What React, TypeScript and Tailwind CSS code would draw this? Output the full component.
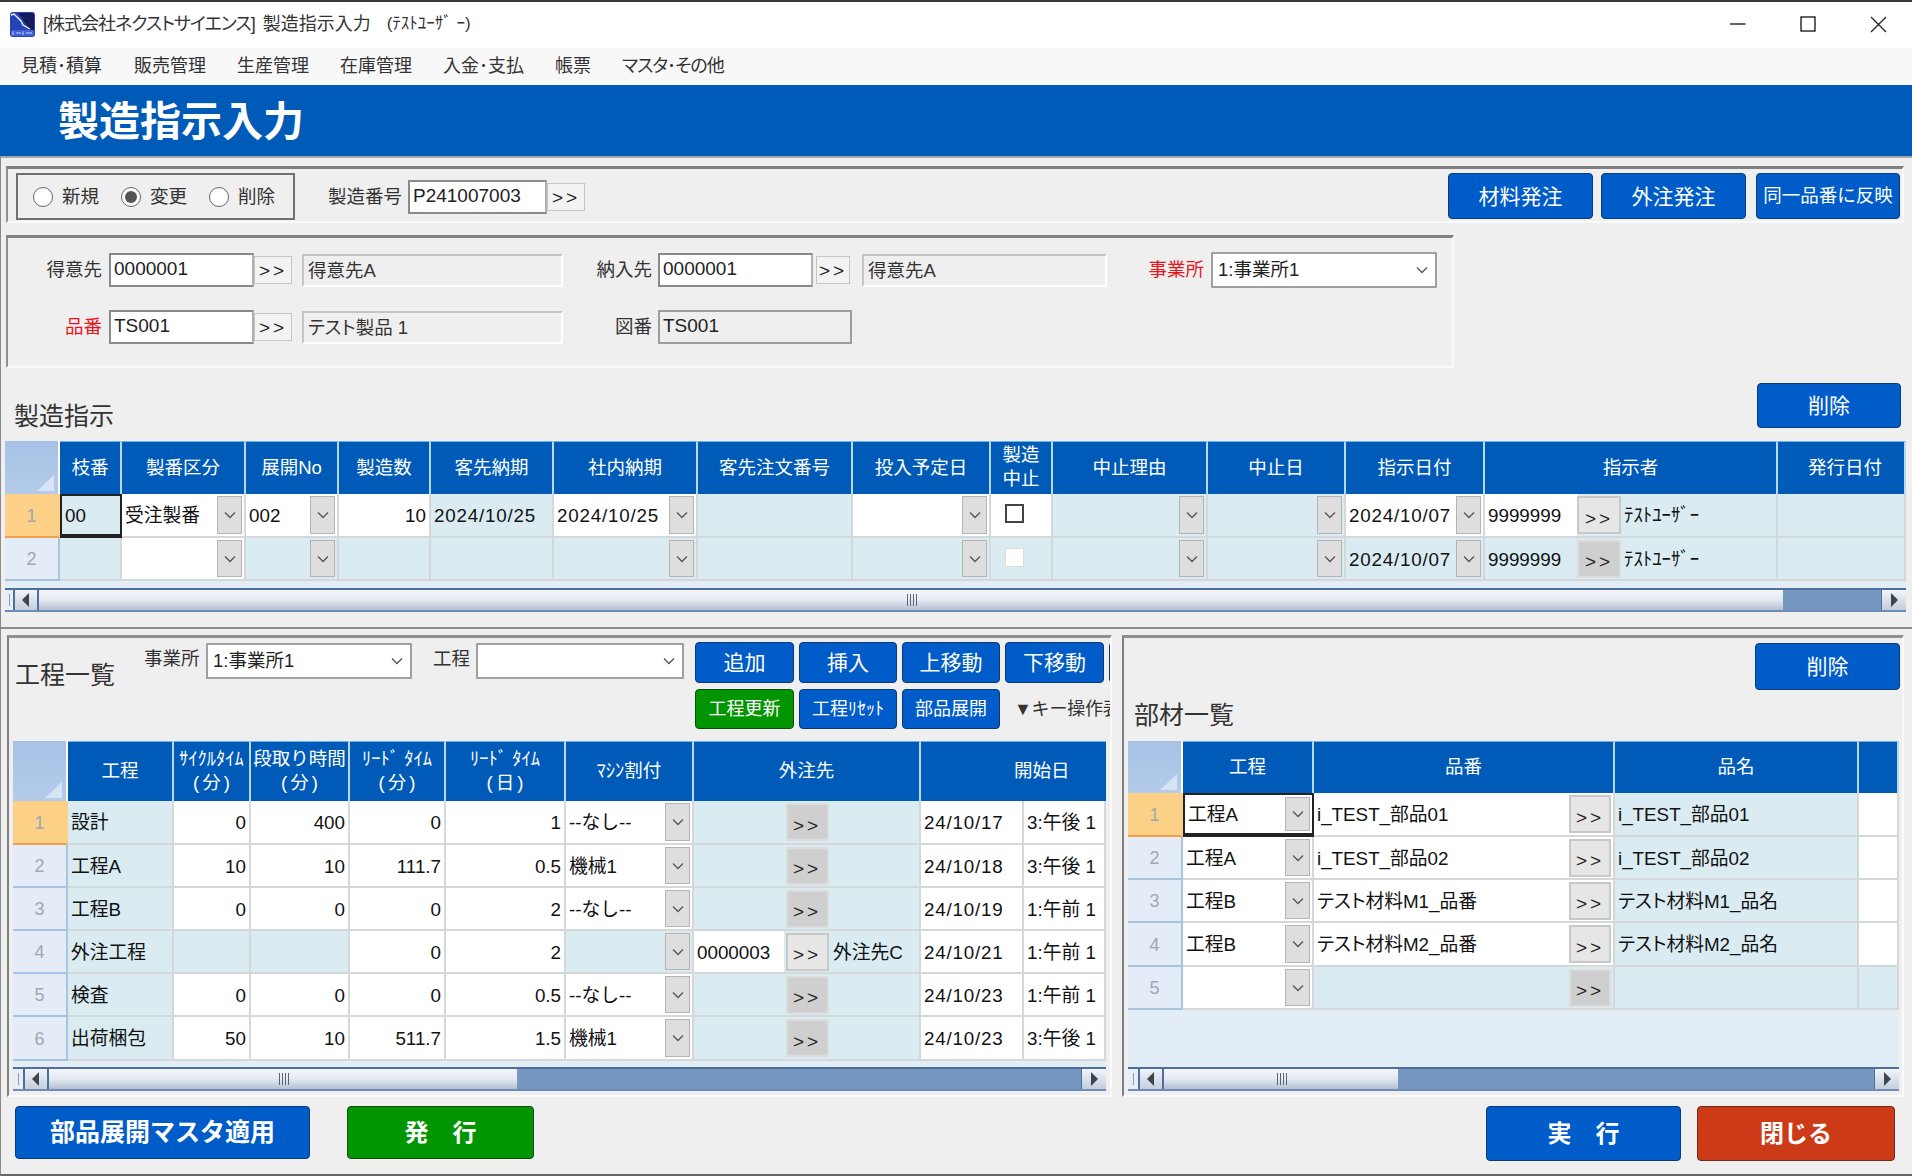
import type { ReactNode } from "react";

const JP = "font-['Liberation_Sans','Noto_Sans_CJK_JP',sans-serif]";

function Chevron() {
    return (
        <svg width="12" height="8" viewBox="0 0 12 8" className="shrink-0">
            <path d="M1 1.5 L6 6.5 L11 1.5" fill="none" stroke="#555" strokeWidth="1.3" />
        </svg>
    );
}

function DropBtn() {
    return (
        <div className="w-[25px] shrink-0 self-stretch my-[2px] mr-[2px] flex items-center justify-center bg-[#dedede] border border-[#b4b4b4]">
            <Chevron />
        </div>
    );
}

function ArrowBtn({ dark, w = "w-[42px]", h = "h-[36px]" }: { dark?: boolean; w?: string; h?: string }) {
    return (
        <div className={`${w} ${h} shrink-0 flex items-center justify-center pt-[6px] text-[19px] tracking-[3px] text-[#222] ${dark ? "bg-[#cfcfcf] border-2 border-[#dcdcdc]" : "bg-[#e6e6e6] border-2 border-[#c8c8c8]"}`}>
            &gt;&gt;
        </div>
    );
}

function FormBtn({ w }: { w: string }) {
    return (
        <div className={`${w} h-[28px] shrink-0 flex items-center justify-center pt-[3px] bg-[#f3f3f3] border border-[#c6c6c6] text-[19px] tracking-[3px] text-[#222]`}>
            &gt;&gt;
        </div>
    );
}

function Input({ w, h = "h-[34px]", children }: { w: string; h?: string; children: ReactNode }) {
    return (
        <div className={`${w} ${h} shrink-0 bg-white border-2 border-t-[#8a8a8a] border-l-[#8a8a8a] border-r-[#b0b0b0] border-b-[#8a8a8a] px-[3px] flex items-center text-[19px] text-[#222] leading-none pb-[3px]`}>
            {children}
        </div>
    );
}

function ReadOnly({ w, children }: { w: string; children: ReactNode }) {
    return (
        <div className={`${w} h-[33px] shrink-0 bg-[#efefef] border-2 border-t-[#c4c4c4] border-l-[#c4c4c4] border-r-white border-b-white px-[4px] pt-[2px] flex items-center text-[18.5px] text-[#333] leading-none [font-feature-settings:'palt']`}>
            {children}
        </div>
    );
}

function Select({ w, value }: { w: string; value?: string }) {
    return (
        <div className={`${w} h-[36px] shrink-0 bg-white border-2 border-[#a0a0a0] pl-[5px] pr-[7px] flex items-center justify-between text-[18.5px] text-[#222]`}>
            <span>{value}</span>
            <Chevron />
        </div>
    );
}

function Label({ w, red, children }: { w: string; red?: boolean; children: ReactNode }) {
    return <div className={`${w} shrink-0 text-right text-[18.5px] whitespace-nowrap ${red ? "text-[#e8141c]" : "text-[#333]"}`}>{children}</div>;
}

function Btn({ w, h, color = "blue", text = "text-[21px]", children }: { w: string; h: string; color?: "blue" | "green" | "red"; text?: string; children: ReactNode }) {
    const c = color == "green"
        ? "bg-[#019601] border-[#0c4f0c]"
        : color == "red"
            ? "bg-[#cc3a18] border-[#6c2a18]"
            : "bg-[#005cc8] border-[#0c3a72]";
    return (
        <div className={`${w} ${h} ${c} ${text} shrink-0 rounded-[4px] border-[1.5px] flex items-center justify-center text-white leading-none whitespace-pre`}>
            {children}
        </div>
    );
}

function Radio({ label, checked }: { label: string; checked?: boolean }) {
    return (
        <div className="w-[88px] shrink-0 flex items-center gap-[9px]">
            <div className="w-[20px] h-[20px] rounded-full bg-white border-[1.5px] border-[#666] flex items-center justify-center">
                {checked && <div className="w-[12px] h-[12px] rounded-full bg-[#555]" />}
            </div>
            <span className="text-[18.5px] text-[#333]">{label}</span>
        </div>
    );
}

function Scrollbar({ grip, thumb, gripAt }: { grip: string; thumb: string; gripAt: string }) {
    return (
        <div className="h-[24px] flex items-stretch bg-[#7698c0] border-y-2 border-t-[#4e6f9e] border-b-[#6d8db8]">
            <div className={`${grip} shrink-0 bg-[#e8eef6] flex items-center justify-center`}>
                <div className="w-[1px] h-[12px] bg-[#8a9ab0]" />
            </div>
            <div className="w-[26px] shrink-0 bg-gradient-to-b from-[#f2f5fa] to-[#c4cedd] border-x-2 border-[#4e6f9e] flex items-center justify-center">
                <svg width="8" height="14" viewBox="0 0 8 14"><path d="M7 0 V14 L0 7 Z" fill="#3d4650" /></svg>
            </div>
            <div className={`${thumb} shrink-0 bg-gradient-to-b from-[#f4f6fb] via-[#e4e9f1] to-[#b4c0d2] flex items-center ${gripAt}`}>
                <div className="flex gap-[2px]">
                    <div className="w-[1px] h-[12px] bg-[#5a6675]" />
                    <div className="w-[1px] h-[12px] bg-[#5a6675]" />
                    <div className="w-[1px] h-[12px] bg-[#5a6675]" />
                    <div className="w-[1px] h-[12px] bg-[#5a6675]" />
                </div>
            </div>
            <div className="flex-1" />
            <div className="w-[25px] shrink-0 bg-gradient-to-b from-[#f2f5fa] to-[#c4cedd] border-l border-[#4e6f9e] flex items-center justify-center">
                <svg width="8" height="14" viewBox="0 0 8 14"><path d="M1 0 V14 L8 7 Z" fill="#3d4650" /></svg>
            </div>
        </div>
    );
}

function Corner() {
    return (
        <div className="bg-gradient-to-b from-[#a6c2e6] to-[#b4cbea] flex items-end justify-end pr-[4px] pb-[3px] border-r-2 border-white">
            <svg width="17" height="16" viewBox="0 0 17 16"><path d="M17 0 V16 H0 Z" fill="#d6e4f5" /></svg>
        </div>
    );
}

function Head({ children, small, pad }: { children?: ReactNode; small?: boolean; pad?: string }) {
    return (
        <div className={`bg-[#005bb8] border-t border-[#6fb4e8] border-r-2 border-r-[#b8d8f0] flex items-center justify-center text-center text-white pb-[2px] ${small ? "leading-[24px]" : "leading-[25px]"} text-[18.5px] overflow-hidden whitespace-nowrap ${pad ?? ""}`}>
            <div>{children}</div>
        </div>
    );
}

function Paren({ children }: { children: ReactNode }) {
    return <span className="tracking-[3px] pl-[3px]">({children})</span>;
}

function RowHead({ n, sel }: { n: number; sel?: boolean }) {
    return (
        <div className={`flex items-center justify-center pt-[2px] text-[18px] text-[#a0a8b0] border-r-2 ${sel ? "bg-[#fdd088] border-b-2 border-b-[#f0a04a] border-r-[#fdd088]" : "bg-[#e4ecf7] border-b-2 border-b-[#a9c4e0] border-r-[#a9c4e0]"}`}>
            {n}
        </div>
    );
}

// b = 水色セル, 無指定 = 白セル
function Cell({ b, right, sel, children }: { b?: boolean; right?: boolean; sel?: boolean; children?: ReactNode }) {
    return (
        <div className={`flex items-center overflow-hidden whitespace-nowrap text-[19px] text-[#111] leading-none ${b ? "bg-[#daecf2]" : "bg-white"} ${right ? "justify-end" : ""} ${sel ? "border-2 border-b-[4px] border-[#222]" : "border-r-2 border-b-2 border-[#d4d8da]"}`}>
            {children}
        </div>
    );
}

function Txt({ children, grow, date, palt }: { children?: ReactNode; grow?: boolean; date?: boolean; palt?: boolean }) {
    return <span className={`px-[3px] pt-[3px] text-[18.8px] ${grow ? "flex-1" : ""} ${date ? "tracking-[0.8px]" : ""} ${palt ? "[font-feature-settings:'palt']" : ""}`}>{children}</span>;
}

function Chk({ on }: { on?: boolean }) {
    return <div className={`ml-[14px] mb-[3px] w-[19px] h-[19px] bg-white ${on ? "border-2 border-[#444]" : "border border-[#dddddd]"}`} />;
}

const g1 = "grid grid-cols-[55px_62px_124px_93px_92px_123px_144px_155px_138px_62px_155px_138px_139px_293px_128px]";
const g2 = "grid grid-cols-[55px_106px_77px_99px_96px_120px_128px_227px_185px]";
const g3 = "grid grid-cols-[55px_131px_301px_244px_40px]";

const processes = [
    { n: 1, name: "設計", cy: "0", st: "400", lm: "0", ld: "1", m: "--なし--", date: "24/10/17", slot: "3:午後 1" },
    { n: 2, name: "工程A", cy: "10", st: "10", lm: "111.7", ld: "0.5", m: "機械1", date: "24/10/18", slot: "3:午後 1" },
    { n: 3, name: "工程B", cy: "0", st: "0", lm: "0", ld: "2", m: "--なし--", date: "24/10/19", slot: "1:午前 1" },
    { n: 4, name: "外注工程", lm: "0", ld: "2", code: "0000003", out: "外注先C", date: "24/10/21", slot: "1:午前 1" },
    { n: 5, name: "検査", cy: "0", st: "0", lm: "0", ld: "0.5", m: "--なし--", date: "24/10/23", slot: "1:午前 1" },
    { n: 6, name: "出荷梱包", cy: "50", st: "10", lm: "511.7", ld: "1.5", m: "機械1", date: "24/10/23", slot: "3:午後 1" },
];

const parts = [
    { n: 1, proc: "工程A", no: "i_TEST_部品01", name: "i_TEST_部品01" },
    { n: 2, proc: "工程A", no: "i_TEST_部品02", name: "i_TEST_部品02" },
    { n: 3, proc: "工程B", no: "テスト材料M1_品番", name: "テスト材料M1_品名" },
    { n: 4, proc: "工程B", no: "テスト材料M2_品番", name: "テスト材料M2_品名" },
    { n: 5, proc: "" },
];

export default function App() {
    return (
        <div className={`w-[1912px] h-[1176px] bg-[#efefef] flex flex-col overflow-hidden ${JP}`}>
            {/* title bar */}
            <div className="h-[48px] shrink-0 bg-white border-t-2 border-[#3a3a3a] flex items-center pl-[10px] pb-[2px]">
                <svg width="25" height="25" viewBox="0 0 25 25" className="shrink-0">
                    <rect width="25" height="25" rx="3" fill="#2742b4" />
                    <path d="M8 1 H22 Q24 1 24 3 V18 H20 Z" fill="#141c5c" />
                    <path d="M1 3 L4 2 L11 9 L13 13 L20 17" fill="none" stroke="#eef2fc" strokeWidth="1.4" />
                    <rect x="1" y="18" width="23" height="6" rx="1" fill="#3f5fd8" />
                    <path d="M3 19.5 V23 M6 21 H11 M13 19.5 V23 M16 21 H22" stroke="#c8d6f8" strokeWidth="1" />
                </svg>
                <span className="ml-[8px] text-[18px] text-[#333] [font-feature-settings:'palt'] tracking-[-1px]">[株式会社ネクストサイエンス]</span>
                <span className="ml-[8px] text-[18px] text-[#333]">製造指示入力</span>
                <span className="ml-[16px] text-[17px] text-[#333]">(ﾃｽﾄﾕｰｻﾞ ｰ)</span>
                <div className="ml-auto flex items-center">
                    <svg width="16" height="16" viewBox="0 0 16 16" className="mr-[54px]"><path d="M0 8 H15.5" stroke="#222" strokeWidth="1.4" /></svg>
                    <svg width="16" height="16" viewBox="0 0 16 16" className="mr-[54px]"><rect x="1" y="1" width="14" height="14" fill="none" stroke="#222" strokeWidth="1.4" /></svg>
                    <svg width="17" height="17" viewBox="0 0 17 17" className="mr-[25px]"><path d="M1 1 L16 16 M16 1 L1 16" stroke="#222" strokeWidth="1.3" /></svg>
                </div>
            </div>

            {/* menu */}
            <div className="h-[37px] shrink-0 bg-[#f8f8f8] flex items-center gap-[31px] pl-[21px] text-[18px] text-[#333]">
                <span className="mr-[1px]">見積･積算</span>
                <span>販売管理</span>
                <span>生産管理</span>
                <span>在庫管理</span>
                <span>入金･支払</span>
                <span>帳票</span>
                <span className="[font-feature-settings:'palt'] tracking-[-1px]">マスタ･その他</span>
            </div>

            {/* page title */}
            <div className="h-[71px] shrink-0 bg-[#005bb8] flex items-center pl-[58px] pt-[3px]">
                <span className="text-[41px] font-bold text-white leading-none">製造指示入力</span>
            </div>

            <div className="flex-1 flex flex-col border-t-2 border-t-[#a8a8a8] border-l border-l-[#8a8a8a] border-b-2 border-b-[#666]">
                {/* mode */}
                <div className="mt-[8px] ml-[5px] w-[1898px] h-[57px] shrink-0 border-t-[3px] border-l-2 border-t-[#808080] border-l-[#909090] border-r-2 border-b-2 border-r-[#fafafa] border-b-[#fafafa] pl-[8px] pr-[2px] pt-[4px] flex items-start">
                    <div className="w-[279px] h-[47px] shrink-0 border-2 border-[#707070] pl-[15px] flex items-center">
                        <Radio label="新規" />
                        <Radio label="変更" checked />
                        <Radio label="削除" />
                    </div>
                    <div className="h-[47px] flex items-center ml-[33px]">
                        <Label w="w-[74px]">製造番号</Label>
                        <div className="ml-[6px]"><Input w="w-[139px]">P241007003</Input></div>
                        <FormBtn w="w-[38px]" />
                    </div>
                    <div className="ml-auto flex">
                        <Btn w="w-[145px]" h="h-[46px]">材料発注</Btn>
                        <div className="ml-[8px]"><Btn w="w-[145px]" h="h-[46px]">外注発注</Btn></div>
                        <div className="ml-[10px]"><Btn w="w-[144px]" h="h-[46px]" text="text-[18.5px]">同一品番に反映</Btn></div>
                    </div>
                </div>

                {/* customer / item */}
                <div className="mt-[12px] ml-[5px] w-[1448px] h-[133px] shrink-0 border-t-[3px] border-l-2 border-t-[#808080] border-l-[#909090] border-r-2 border-b-2 border-r-[#fafafa] border-b-[#fafafa] pt-[14px]">
                    <div className="h-[36px] flex items-center">
                        <Label w="w-[94px]">得意先</Label>
                        <div className="ml-[7px]"><Input w="w-[145px]">0000001</Input></div>
                        <FormBtn w="w-[38px]" />
                        <div className="ml-[10px]"><ReadOnly w="w-[261px]">得意先A</ReadOnly></div>
                        <Label w="w-[89px]">納入先</Label>
                        <div className="ml-[6px]"><Input w="w-[155px]">0000001</Input></div>
                        <div className="ml-[3px]"><FormBtn w="w-[34px]" /></div>
                        <div className="ml-[12px]"><ReadOnly w="w-[245px]">得意先A</ReadOnly></div>
                        <Label w="w-[97px]" red>事業所</Label>
                        <div className="ml-[7px]"><Select w="w-[226px]" value="1:事業所1" /></div>
                    </div>
                    <div className="mt-[21px] h-[36px] flex items-center">
                        <Label w="w-[94px]" red>品番</Label>
                        <div className="ml-[7px]"><Input w="w-[145px]">TS001</Input></div>
                        <FormBtn w="w-[38px]" />
                        <div className="ml-[10px]"><ReadOnly w="w-[261px]">テスト製品 1</ReadOnly></div>
                        <Label w="w-[89px]">図番</Label>
                        <div className="ml-[6px]">
                            <div className="w-[194px] h-[34px] bg-[#efefef] border-2 border-[#9c9c9c] px-[3px] flex items-center text-[19px] text-[#222] leading-none pb-[3px]">TS001</div>
                        </div>
                    </div>
                </div>

                {/* 製造指示 */}
                <div className="h-[73px] shrink-0 flex justify-between pl-[13px] pr-[11px]">
                    <div className="mt-[36px] text-[25px] leading-none text-[#333]">製造指示</div>
                    <div className="mt-[15px]"><Btn w="w-[144px]" h="h-[45px]">削除</Btn></div>
                </div>
                <div className="ml-[4px] w-[1901px] shrink-0">
                    <div className={`${g1} h-[53px]`}>
                        <Corner />
                        <Head>枝番</Head>
                        <Head>製番区分</Head>
                        <Head>展開No</Head>
                        <Head>製造数</Head>
                        <Head>客先納期</Head>
                        <Head>社内納期</Head>
                        <Head>客先注文番号</Head>
                        <Head>投入予定日</Head>
                        <Head small>製造<br />中止</Head>
                        <Head>中止理由</Head>
                        <Head>中止日</Head>
                        <Head>指示日付</Head>
                        <Head>指示者</Head>
                        <Head pad="pl-[8px]">発行日付</Head>
                    </div>
                    <div className={`${g1} h-[44px]`}>
                        <RowHead n={1} sel />
                        <Cell b sel><Txt>00</Txt></Cell>
                        <Cell><Txt grow>受注製番</Txt><DropBtn /></Cell>
                        <Cell><Txt grow>002</Txt><DropBtn /></Cell>
                        <Cell right><Txt>10</Txt></Cell>
                        <Cell b><Txt date>2024/10/25</Txt></Cell>
                        <Cell><Txt grow date>2024/10/25</Txt><DropBtn /></Cell>
                        <Cell b />
                        <Cell><Txt grow /><DropBtn /></Cell>
                        <Cell><Chk on /></Cell>
                        <Cell b><Txt grow /><DropBtn /></Cell>
                        <Cell b><Txt grow /><DropBtn /></Cell>
                        <Cell><Txt grow date>2024/10/07</Txt><DropBtn /></Cell>
                        <Cell b>
                            <div className="w-[92px] self-stretch bg-white flex items-center"><Txt>9999999</Txt></div>
                            <ArrowBtn w="w-[44px]" h="h-[38px]" />
                            <Txt>ﾃｽﾄﾕｰｻﾞｰ</Txt>
                        </Cell>
                        <Cell b />
                    </div>
                    <div className={`${g1} h-[43px]`}>
                        <RowHead n={2} />
                        <Cell b />
                        <Cell><Txt grow /><DropBtn /></Cell>
                        <Cell b><Txt grow /><DropBtn /></Cell>
                        <Cell b />
                        <Cell b />
                        <Cell b><Txt grow /><DropBtn /></Cell>
                        <Cell b />
                        <Cell b><Txt grow /><DropBtn /></Cell>
                        <Cell b><Chk /></Cell>
                        <Cell b><Txt grow /><DropBtn /></Cell>
                        <Cell b><Txt grow /><DropBtn /></Cell>
                        <Cell b><Txt grow date>2024/10/07</Txt><DropBtn /></Cell>
                        <Cell b>
                            <div className="w-[92px] flex items-center"><Txt>9999999</Txt></div>
                            <ArrowBtn dark w="w-[44px]" h="h-[38px]" />
                            <Txt>ﾃｽﾄﾕｰｻﾞｰ</Txt>
                        </Cell>
                        <Cell b />
                    </div>
                    <div className="h-[7px] bg-[#e3edf6]" />
                    <Scrollbar grip="w-[8px]" thumb="w-[1744px]" gripAt="pl-[868px]" />
                </div>

                <div className="mt-[15px] h-[2px] shrink-0 bg-[#8c8c8c]" />

                {/* lower panels */}
                <div className="mt-[6px] flex shrink-0">
                    {/* 工程一覧 */}
                    <div className="ml-[6px] w-[1105px] h-[462px] shrink-0 overflow-hidden border-t-[3px] border-l-2 border-t-[#909090] border-l-[#808080] border-r-2 border-b-2 border-r-[#fafafa] border-b-[#fafafa]">
                        <div className="h-[103px] flex pl-[6px]">
                            <div className="w-[129px] shrink-0 mt-[25px] text-[25px] leading-none text-[#333]">工程一覧</div>
                            <div className="w-[56px] shrink-0 mt-[7px] text-[18.5px] text-[#333] whitespace-nowrap">事業所</div>
                            <div className="ml-[6px] mt-[5px]"><Select w="w-[206px]" value="1:事業所1" /></div>
                            <div className="ml-[21px] w-[37px] shrink-0 mt-[7px] text-[18.5px] text-[#333] whitespace-nowrap">工程</div>
                            <div className="ml-[6px] mt-[5px]"><Select w="w-[208px]" /></div>
                            <div className="ml-[11px] mt-[4px] w-[415px] shrink-0 overflow-hidden">
                                <div className="flex gap-[5px]">
                                    <Btn w="w-[99px]" h="h-[41px]">追加</Btn>
                                    <Btn w="w-[98px]" h="h-[41px]">挿入</Btn>
                                    <Btn w="w-[98px]" h="h-[41px]">上移動</Btn>
                                    <Btn w="w-[99px]" h="h-[41px]">下移動</Btn>
                                    <Btn w="w-[99px]" h="h-[41px]">{" "}</Btn>
                                </div>
                                <div className="mt-[6px] flex gap-[5px] items-center">
                                    <Btn w="w-[99px]" h="h-[40px]" color="green" text="text-[18px]">工程更新</Btn>
                                    <Btn w="w-[98px]" h="h-[40px]" text="text-[18px]">工程ﾘｾｯﾄ</Btn>
                                    <Btn w="w-[98px]" h="h-[40px]" text="text-[18px]">部品展開</Btn>
                                    <span className="ml-[9px] text-[18px] tracking-[-0.2px] text-[#333] whitespace-nowrap">▼キー操作表</span>
                                </div>
                            </div>
                        </div>
                        <div className="ml-[4px] w-[1093px]">
                            <div className={`${g2} h-[60px]`}>
                                <Corner />
                                <Head>工程</Head>
                                <Head small>ｻｲｸﾙﾀｲﾑ<br /><Paren>分</Paren></Head>
                                <Head small>段取り時間<br /><Paren>分</Paren></Head>
                                <Head small>ﾘｰﾄﾞ ﾀｲﾑ<br /><Paren>分</Paren></Head>
                                <Head small>ﾘｰﾄﾞ ﾀｲﾑ<br /><Paren>日</Paren></Head>
                                <Head>ﾏｼﾝ割付</Head>
                                <Head>外注先</Head>
                                <div className="bg-[#005bb8] border-t border-[#6fb4e8] text-white text-[18.5px] flex items-center pl-[93px] pb-[2px]">開始日</div>
                            </div>
                            {processes.map((p) => (
                                <div key={p.n} className={`${g2} ${p.n == 1 || p.n == 6 ? "h-[44px]" : "h-[43px]"}`}>
                                    <RowHead n={p.n} sel={p.n == 1} />
                                    <Cell b><Txt>{p.name}</Txt></Cell>
                                    <Cell b={!p.cy} right><Txt>{p.cy}</Txt></Cell>
                                    <Cell b={!p.st} right><Txt>{p.st}</Txt></Cell>
                                    <Cell right><Txt>{p.lm}</Txt></Cell>
                                    <Cell right><Txt>{p.ld}</Txt></Cell>
                                    <Cell b={!p.m}><Txt grow>{p.m}</Txt><DropBtn /></Cell>
                                    <Cell b>
                                        <div className={`w-[90px] self-stretch shrink-0 flex items-center ${p.code ? "bg-white" : ""}`}><Txt>{p.code}</Txt></div>
                                        <div className="w-[46px] shrink-0 flex justify-center"><ArrowBtn dark={!p.code} w="w-[43px]" h="h-[38px]" /></div>
                                        <Txt>{p.out}</Txt>
                                    </Cell>
                                    <Cell>
                                        <div className="w-[103px] self-stretch shrink-0 flex items-center border-r-2 border-[#d4d8da]"><Txt date>{p.date}</Txt></div>
                                        <Txt>{p.slot}</Txt>
                                    </Cell>
                                </div>
                            ))}
                            <div className="h-[6px] bg-[#e3edf6]" />
                            <Scrollbar grip="w-[10px]" thumb="w-[468px]" gripAt="pl-[230px]" />
                        </div>
                    </div>

                    {/* 部材一覧 */}
                    <div className="ml-[10px] w-[782px] h-[462px] shrink-0 border-t-[3px] border-l-2 border-t-[#909090] border-l-[#808080] border-r-2 border-b-2 border-r-[#fafafa] border-b-[#fafafa]">
                        <div className="h-[103px] flex justify-between pl-[10px] pr-[2px]">
                            <div className="mt-[65px] text-[25px] leading-none text-[#333]">部材一覧</div>
                            <div className="mt-[5px]"><Btn w="w-[145px]" h="h-[47px]">削除</Btn></div>
                        </div>
                        <div className="ml-[4px] w-[771px]">
                            <div className={`${g3} h-[52px]`}>
                                <Corner />
                                <Head>工程</Head>
                                <Head>品番</Head>
                                <Head>品名</Head>
                                <Head />
                            </div>
                            {parts.map((p) => (
                                <div key={p.n} className={`${g3} ${p.n == 1 || p.n == 4 ? "h-[44px]" : "h-[43px]"}`}>
                                    <RowHead n={p.n} sel={p.n == 1} />
                                    <Cell sel={p.n == 1}><Txt grow>{p.proc}</Txt><DropBtn /></Cell>
                                    <Cell b={!p.no}>
                                        <Txt grow palt>{p.no}</Txt>
                                        <div className="mr-[2px]"><ArrowBtn dark={!p.no} w="w-[42px]" h="h-[38px]" /></div>
                                    </Cell>
                                    <Cell b><Txt palt>{p.name}</Txt></Cell>
                                    <Cell b={!p.no} />
                                </div>
                            ))}
                            <div className="h-[57px] bg-[#e3edf6]" />
                            <Scrollbar grip="w-[10px]" thumb="w-[234px]" gripAt="pl-[113px]" />
                        </div>
                    </div>
                </div>

                {/* footer */}
                <div className="flex-1 flex items-start pt-[9px] pl-[14px]">
                    <Btn w="w-[295px]" h="h-[53px]" text="text-[25px] font-bold">部品展開マスタ適用</Btn>
                    <div className="ml-[37px]"><Btn w="w-[187px]" h="h-[53px]" color="green" text="text-[24px] font-bold">発　行</Btn></div>
                    <div className="ml-[952px]"><Btn w="w-[195px]" h="h-[55px]" text="text-[24px] font-bold">実　行</Btn></div>
                    <div className="ml-[16px]"><Btn w="w-[198px]" h="h-[55px]" color="red" text="text-[24px] font-bold">閉じる</Btn></div>
                </div>
            </div>
        </div>
    );
}
